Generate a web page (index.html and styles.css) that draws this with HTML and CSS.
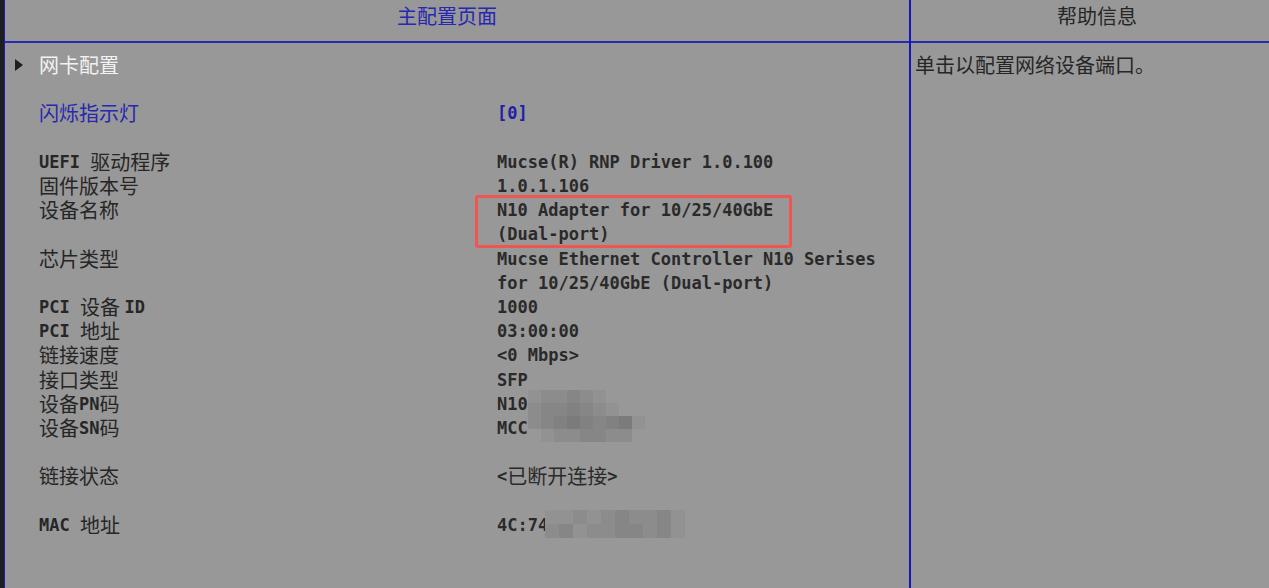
FILE: index.html
```html
<!DOCTYPE html>
<html lang="zh-CN">
<head>
    <meta charset="UTF-8">
    <title>主配置页面</title>
    <link rel="stylesheet" href="styles.css">
</head>
<body>
    <div class="screen">
        <div class="main">
            <div class="title blue">主配置页面</div>
            <div class="body">
                <div class="row"><span class="arrow"></span><span class="label white">网卡配置</span><span></span></div>

                <div class="row gap"><span></span><span class="label blue">闪烁指示灯</span><span class="value blue">[0]</span></div>

                <div class="row gap"><span></span><span class="label"><span class="en">UEFI </span>驱动程序</span><span class="value">Mucse(R) RNP Driver 1.0.100</span></div>
                <div class="row"><span></span><span class="label">固件版本号</span><span class="value">1.0.1.106</span></div>
                <div class="row"><span></span><span class="label">设备名称</span>
                    <span class="value"><span class="mark">N10 Adapter for 10/25/40GbE<br>(Dual-port)</span></span></div>
                <div class="row"><span></span><span class="label">芯片类型</span><span class="value">Mucse Ethernet Controller N10 Serises<br>for 10/25/40GbE (Dual-port)</span></div>
                <div class="row"><span></span><span class="label"><span class="en">PCI </span>设备 <span class="en">ID</span></span><span class="value">1000</span></div>
                <div class="row"><span></span><span class="label"><span class="en">PCI </span>地址</span><span class="value">03:00:00</span></div>
                <div class="row"><span></span><span class="label">链接速度</span><span class="value">&lt;0 Mbps&gt;</span></div>
                <div class="row"><span></span><span class="label">接口类型</span><span class="value">SFP</span></div>
                <div class="row"><span></span><span class="label">设备<span class="en">PN</span>码</span>
                    <span class="value">N10
                        <span class="mosaic pn">
                            <i class="m1"></i><i class="m2"></i><i class="m2"></i><i class="m3"></i><i class="m2"></i><i class="m1"></i><i></i><i></i><i></i>
                            <i class="m2"></i><i class="m3"></i><i class="m3"></i><i class="m4"></i><i class="m3"></i><i class="m2"></i><i class="m1"></i><i></i><i></i>
                            <i class="m2"></i><i class="m3"></i><i class="m4"></i><i class="m5"></i><i class="m4"></i><i class="m3"></i><i class="m4"></i><i class="m5"></i><i class="m1"></i>
                            <i></i><i class="m1"></i><i class="m2"></i><i class="m2"></i><i class="m3"></i><i class="m3"></i><i class="m2"></i><i class="m2"></i><i></i>
                        </span>
                    </span></div>
                <div class="row"><span></span><span class="label">设备<span class="en">SN</span>码</span><span class="value">MCC</span></div>

                <div class="row gap"><span></span><span class="label">链接状态</span><span class="value">&lt;<span class="zh">已断开连接</span>&gt;</span></div>

                <div class="row gap"><span></span><span class="label"><span class="en">MAC </span>地址</span>
                    <span class="value">4C:74
                        <span class="mosaic mac">
                            <i class="m1"></i><i class="m1"></i><i class="m2"></i><i class="m1"></i><i class="m2"></i><i class="m3"></i><i class="m2"></i><i class="m2"></i><i class="m3"></i><i class="m1"></i>
                            <i class="m2"></i><i class="m3"></i><i class="m1"></i><i class="m2"></i><i class="m2"></i><i class="m3"></i><i class="m3"></i><i class="m2"></i><i class="m3"></i><i class="m1"></i>
                        </span>
                    </span></div>
            </div>
        </div>
        <div class="help">
            <div class="title">帮助信息</div>
            <div class="body help-text">单击以配置网络设备端口。</div>
        </div>
    </div>
</body>
</html>
```

FILE: styles.css
```css
/* BIOS setup screen, grey theme */
body {
    margin: 0;
    background-color: #989898;
    color: #262626;
    font-family: "Noto Sans CJK SC", sans-serif;
    font-size: 20px;
}

.screen {
    display: flex;
    height: 588px;
    border-left: 4px solid #1d1d22;
    overflow: hidden;
}

.main {
    width: 905px;
    box-sizing: border-box;
    border-left: 1px solid #1c1cb4;
}

.help {
    flex: 1;
    border-left: 2px solid #1616bc;
}

/* header row with the blue rule */
.title {
    height: 41px;
    line-height: 32px;
    text-align: center;
    border-bottom: 2px solid #2a2ab0;
    padding-right: 20px;
}

.help .title {
    padding-right: 0;
    padding-left: 14px;
}

.body {
    padding-top: 10px;
}

.help-text {
    padding-left: 4px;
    line-height: 24.2px;
}

/* setting rows */
.row {
    display: grid;
    grid-template-columns: 34px 458px 1fr;
    line-height: 24.2px;
}

.row.gap {
    margin-top: 24.2px;
}

.arrow {
    width: 0;
    height: 0;
    margin: 6px 0 0 10px;
    border-left: 8px solid #1e1e1e;
    border-top: 6px solid transparent;
    border-bottom: 6px solid transparent;
}

.value {
    position: relative;
    font-family: "DejaVu Sans Mono", "Noto Sans CJK SC", monospace;
    font-size: 17px;
    font-weight: bold;
    color: #2a2a2a;
}

.en {
    font-family: "DejaVu Sans Mono", monospace;
    font-size: 17px;
    font-weight: bold;
    vertical-align: top;
}

.zh {
    font-family: "Noto Sans CJK SC", sans-serif;
    font-size: 20px;
    font-weight: normal;
    vertical-align: top;
}

.blue {
    color: #2727b0;
}

.value.blue {
    color: #2020a8;
}

.white {
    color: #f2f2f2;
}

/* red annotation frame */
.mark {
    position: relative;
    display: inline-block;
}

.mark::after {
    content: "";
    position: absolute;
    top: -3px;
    bottom: -1px;
    left: -22px;
    right: -19px;
    border: 3px solid #f05552;
    border-radius: 3px;
}

/* redaction blocks */
.mosaic {
    position: absolute;
    display: grid;
}

.mosaic.pn {
    left: 31px;
    top: -2px;
    grid-template-columns: repeat(9, 13px);
    grid-auto-rows: 13px;
}

.mosaic.mac {
    left: 48px;
    top: -3px;
    grid-template-columns: repeat(10, 14px);
    grid-auto-rows: 14px;
}

.mosaic i {
    display: block;
}

.m1 { background-color: #929292; }
.m2 { background-color: #8c8c8c; }
.m3 { background-color: #868686; }
.m4 { background-color: #818181; }
.m5 { background-color: #7b7b7b; }
```
